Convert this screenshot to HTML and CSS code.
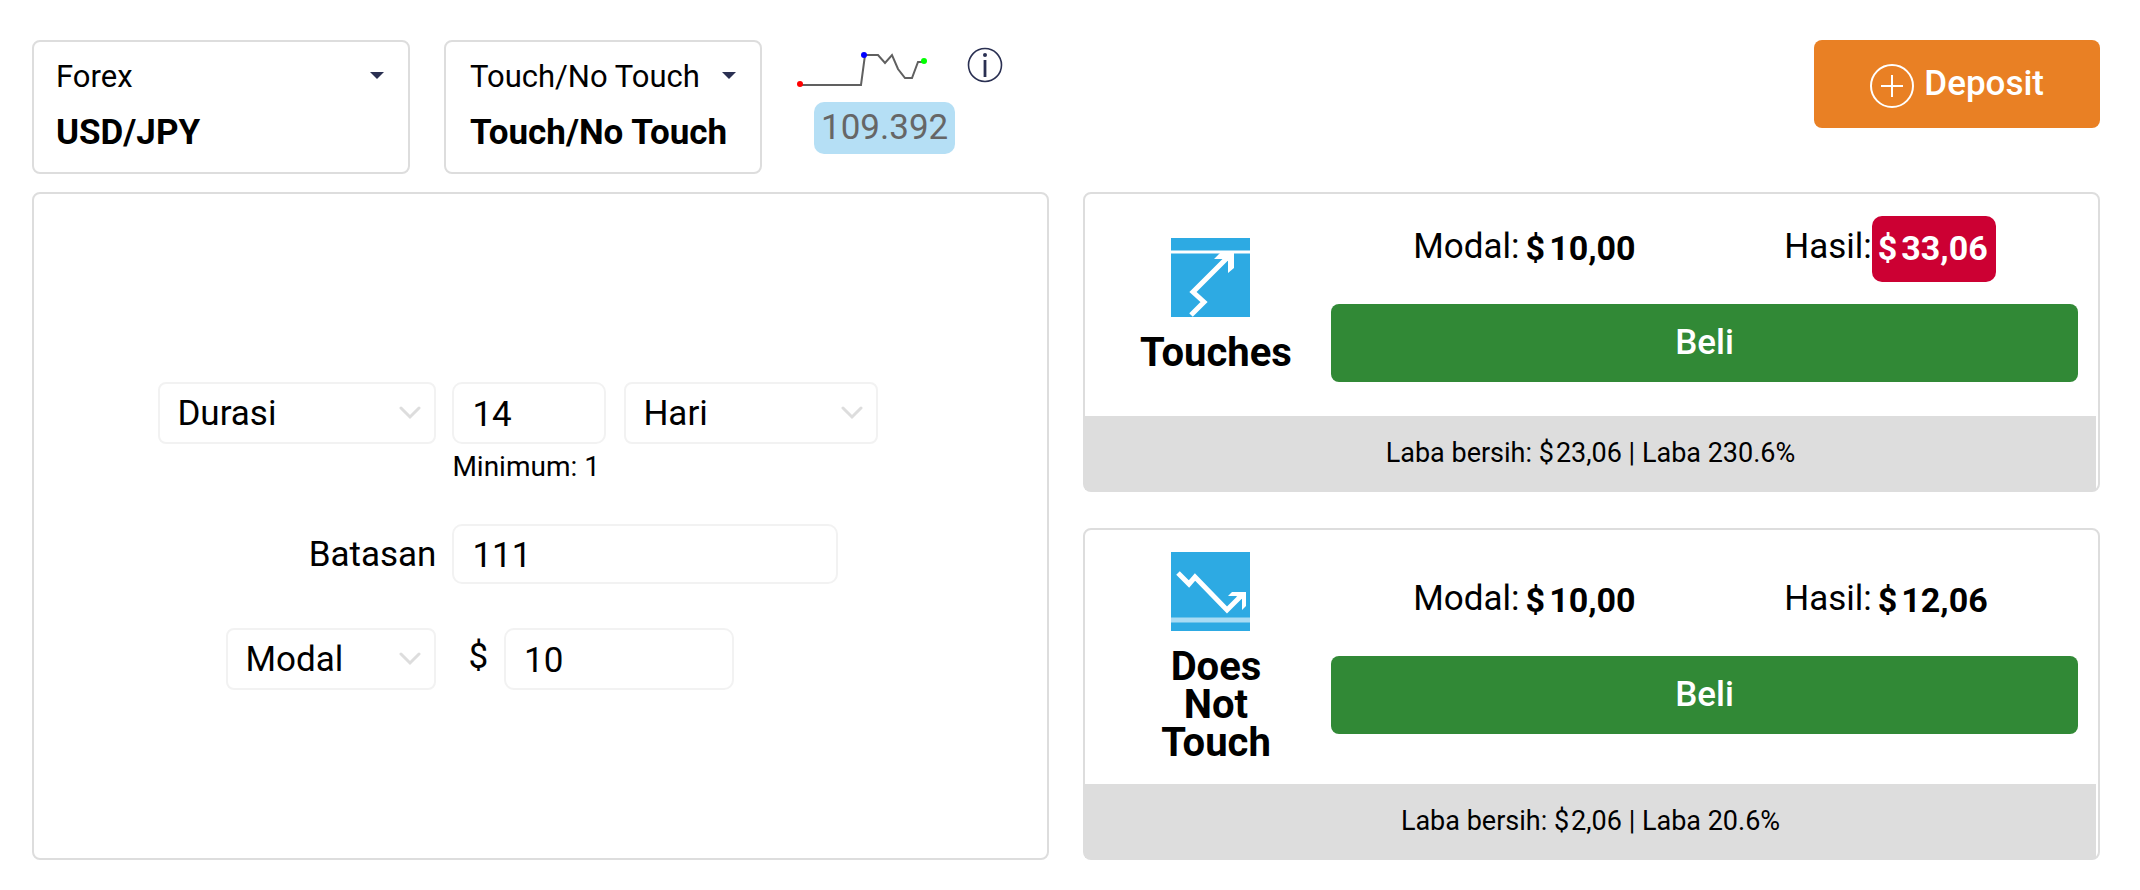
FILE: index.html
```html
<!DOCTYPE html>
<html lang="id">
<head>
<meta charset="utf-8">
<meta name="viewport" content="width=device-width, initial-scale=1">
<title>USD/JPY – Touch/No Touch</title>
<link rel="stylesheet" href="styles.css">
</head>
<body>
<header class="topbar">
  <button class="picker picker-market" type="button">
    <span class="picker-top">Forex<span class="caret"></span></span>
    <strong class="picker-value">USD/JPY</strong>
  </button>
  <button class="picker picker-contract" type="button">
    <span class="picker-top">Touch/No Touch<span class="caret"></span></span>
    <strong class="picker-value">Touch/No Touch</strong>
  </button>
  <div class="ticker">
    <svg class="spark" width="134" height="48" viewBox="0 0 134 48" aria-hidden="true">
      <path d="M4 33H65L69 3H82L89 11L96 3L102 17L109 26H116L122 10H128" fill="none" stroke="#606060" stroke-width="2"/>
      <circle cx="4" cy="32" r="3" fill="#f00"/>
      <circle cx="68" cy="3" r="3" fill="#00f"/>
      <circle cx="128" cy="9" r="3" fill="#0f0"/>
    </svg>
    <span class="spot">109.392</span>
  </div>
  <button class="info" type="button" aria-label="Info">
    <svg width="36" height="36" viewBox="0 0 36 36" fill="none" stroke="#2a3052">
      <circle cx="18" cy="18" r="16.5" stroke-width="1.6"/>
      <path d="M18 13V30" stroke-width="2.8"/>
      <circle cx="18" cy="8" r="2" fill="#2a3052" stroke="none"/>
    </svg>
  </button>
  <button class="deposit" type="button">
    <svg width="44" height="44" viewBox="0 0 44 44" fill="none" stroke="#fff" stroke-width="2">
      <circle cx="22" cy="22" r="21"/>
      <path d="M22 11V33M11 22H33"/>
    </svg>
    Deposit
  </button>
</header>
<main class="board">
  <form class="panel form">
    <div class="lead">
      <select class="field select duration" aria-label="Durasi"><option>Durasi</option></select>
    </div>
    <div class="rest">
      <input class="field amount" id="days" type="text" value="14" aria-label="Durasi">
      <select class="field select unit" aria-label="Satuan"><option>Hari</option></select>
      <label class="hint" for="days">Minimum: 1</label>
    </div>
    <label class="lead" for="barrier">Batasan</label>
    <div class="rest"><input class="field barrier" id="barrier" type="text" value="111"></div>
    <div class="lead">
      <select class="field select basis" aria-label="Modal"><option>Modal</option></select>
    </div>
    <div class="rest">
      <label class="currency" for="stake">$</label>
      <input class="field stake" id="stake" type="text" value="10">
    </div>
  </form>
  <div class="offers">
    <section class="panel offer">
      <div class="offer-body">
        <h2 class="offer-name">
          <svg class="offer-icon" width="79" height="79" viewBox="0 0 79 79" aria-hidden="true">
            <rect width="79" height="79" fill="#2daae3"/>
            <path d="M0 14H79" stroke="#fff" stroke-width="3"/>
            <path d="M20 77L33 64L22 54L57 19" fill="none" stroke="#fff" stroke-width="5"/>
            <path d="M43 21L50 14H63V30L57 35V23L53 21Z" fill="#fff"/>
          </svg>
          Touches
        </h2>
        <div class="offer-main">
          <div class="prices">
            <p class="price"><span class="price-label">Modal:</span><b class="sum"><span>$</span>10,00</b></p>
            <p class="price"><span class="price-label">Hasil:</span><b class="sum sum-down"><span>$</span>33,06</b></p>
          </div>
          <button class="buy" type="button">Beli</button>
        </div>
      </div>
      <p class="offer-foot">Laba bersih: <span class="dollar">$</span>23,06 | Laba 230.6%</p>
    </section>
    <section class="panel offer">
      <div class="offer-body">
        <h2 class="offer-name">
          <svg class="offer-icon" width="79" height="79" viewBox="0 0 79 79" aria-hidden="true">
            <rect width="79" height="79" fill="#2daae3"/>
            <path d="M0 68H79" stroke="#a9dcf4" stroke-width="5"/>
            <path d="M7 21L18 32L24 25L56 58L71 43" fill="none" stroke="#fff" stroke-width="5"/>
            <path d="M57 44L61 40H75V54L71 58V47L65 44Z" fill="#fff"/>
          </svg>
          Does<br>Not<br>Touch
        </h2>
        <div class="offer-main">
          <div class="prices">
            <p class="price"><span class="price-label">Modal:</span><b class="sum"><span>$</span>10,00</b></p>
            <p class="price"><span class="price-label">Hasil:</span><b class="sum"><span>$</span>12,06</b></p>
          </div>
          <button class="buy" type="button">Beli</button>
        </div>
      </div>
      <p class="offer-foot">Laba bersih: <span class="dollar">$</span>2,06 | Laba 20.6%</p>
    </section>
  </div>
</main>
</body>
</html>
```
FILE: styles.css
```css
* {
  box-sizing: border-box;
}

body {
  margin: 0;
  padding: 40px 40px 30px 32px;
  background: #fff;
  color: #000;
  font: 35px/42px Roboto, "Liberation Sans", sans-serif;
}

button,
input,
select {
  font: inherit;
  color: inherit;
}

p,
h2 {
  margin: 0;
}

.topbar {
  display: flex;
  align-items: flex-start;
  margin-bottom: 18px;
}

.picker {
  display: flex;
  flex-direction: column;
  gap: 18px;
  margin-right: 34px;
  padding: 16px 24px 20px 22px;
  border: 2px solid #ddd;
  border-radius: 8px;
  background: #fff;
  text-align: left;
}

.picker-market {
  width: 378px;
}

.picker-contract {
  width: 318px;
  padding-left: 24px;
}

.picker-top {
  display: flex;
  align-items: center;
  justify-content: space-between;
  font-size: 31px;
  line-height: 38px;
}

.picker-value {
  font-size: 35px;
  line-height: 38px;
  font-weight: 700;
}

.caret {
  margin-bottom: 4px;
  border: 7px solid transparent;
  border-top-color: #2a3052;
  border-bottom: 0;
}

.ticker {
  display: flex;
  flex-direction: column;
  align-items: flex-start;
  padding-top: 12px;
}

.spark {
  display: block;
  overflow: visible;
}

.spot {
  margin: 2px 12px 0 18px;
  padding: 5px 7px;
  border-radius: 10px;
  background: #b5dff5;
  color: #666;
}

.info {
  margin-top: 7px;
  padding: 0;
  border: 0;
  background: none;
}

.info svg,
.deposit svg,
.offer-icon {
  display: block;
}

.deposit {
  display: flex;
  align-items: center;
  justify-content: center;
  gap: 10px;
  margin-left: auto;
  padding: 20px 56px;
  border: 0;
  border-radius: 8px;
  background: #e98024;
  color: #fff;
  font-weight: 500;
}

.deposit svg {
  margin-top: 4px;
}

.board {
  display: grid;
  grid-template-columns: 1fr 1fr;
  gap: 34px;
}

.panel {
  border: 2px solid #ddd;
  border-radius: 8px;
}

.form {
  display: grid;
  grid-template-columns: 402fr 594fr;
  column-gap: 16px;
  align-content: start;
  padding: 188px 0 160px;
}

.lead {
  display: flex;
  align-items: flex-start;
  justify-content: flex-end;
}

label.lead {
  padding-top: 10px;
}

.rest {
  display: flex;
  flex-wrap: wrap;
  align-items: flex-start;
  align-content: flex-start;
}

.field {
  height: 62px;
  padding: 2px 18px 0;
  border: 2px solid #f2f2f2;
  border-radius: 10px;
  background: #fff;
}

.select {
  padding: 2px 17px 0;
  border-radius: 8px;
  appearance: none;
  background: #fff url("data:image/svg+xml,%3Csvg xmlns='http://www.w3.org/2000/svg' width='22' height='14' viewBox='0 0 22 14'%3E%3Cpath d='M2 2L11 11L20 2' fill='none' stroke='%23ddd' stroke-width='3' stroke-linecap='round'/%3E%3C/svg%3E") no-repeat right 13px center;
}

.duration {
  width: 278px;
}

.amount {
  width: 154px;
  margin-right: 18px;
}

.unit {
  width: 254px;
}

.hint {
  width: 100%;
  margin-bottom: 38px;
  padding-top: 4px;
  font-size: 28px;
  line-height: 38px;
}

.barrier {
  width: 386px;
  height: 60px;
  margin-bottom: 44px;
}

.basis {
  width: 210px;
}

.currency {
  padding: 8px 16px 0;
}

.stake {
  width: 230px;
}

.offers {
  display: flex;
  flex-direction: column;
  gap: 36px;
}

.offer-body {
  display: flex;
  align-items: center;
  padding: 22px 20px 22px 56px;
}

.offer-name {
  display: flex;
  flex-direction: column;
  align-items: center;
  width: 150px;
  margin-right: 40px;
  font-size: 40px;
  line-height: 38px;
  font-weight: 700;
  text-align: center;
}

.offer-icon {
  margin: 0 12px 17px 0;
}

.offer-main {
  flex: 1;
  padding-bottom: 12px;
}

.prices {
  display: flex;
  justify-content: space-around;
  margin-bottom: 22px;
  padding: 0 12px;
}

.price {
  display: flex;
  align-items: center;
  white-space: nowrap;
}

.price-label {
  padding-bottom: 4px;
}

.sum {
  display: flex;
  gap: 4px;
  padding: 11px 8px 13px 6px;
  border-radius: 10px;
  font-size: 34px;
  font-weight: 700;
}

.sum-down {
  background: #c03;
  color: #fff;
}

.buy {
  display: block;
  width: 100%;
  padding: 18px;
  border: 0;
  border-radius: 8px;
  background: #318936;
  color: #fff;
  font-weight: 500;
}

.offer-foot {
  margin-right: 2px;
  padding: 18px;
  background: #ddd;
  font-size: 27px;
  line-height: 38px;
  text-align: center;
}

.dollar {
  margin-right: 2px;
}
```
